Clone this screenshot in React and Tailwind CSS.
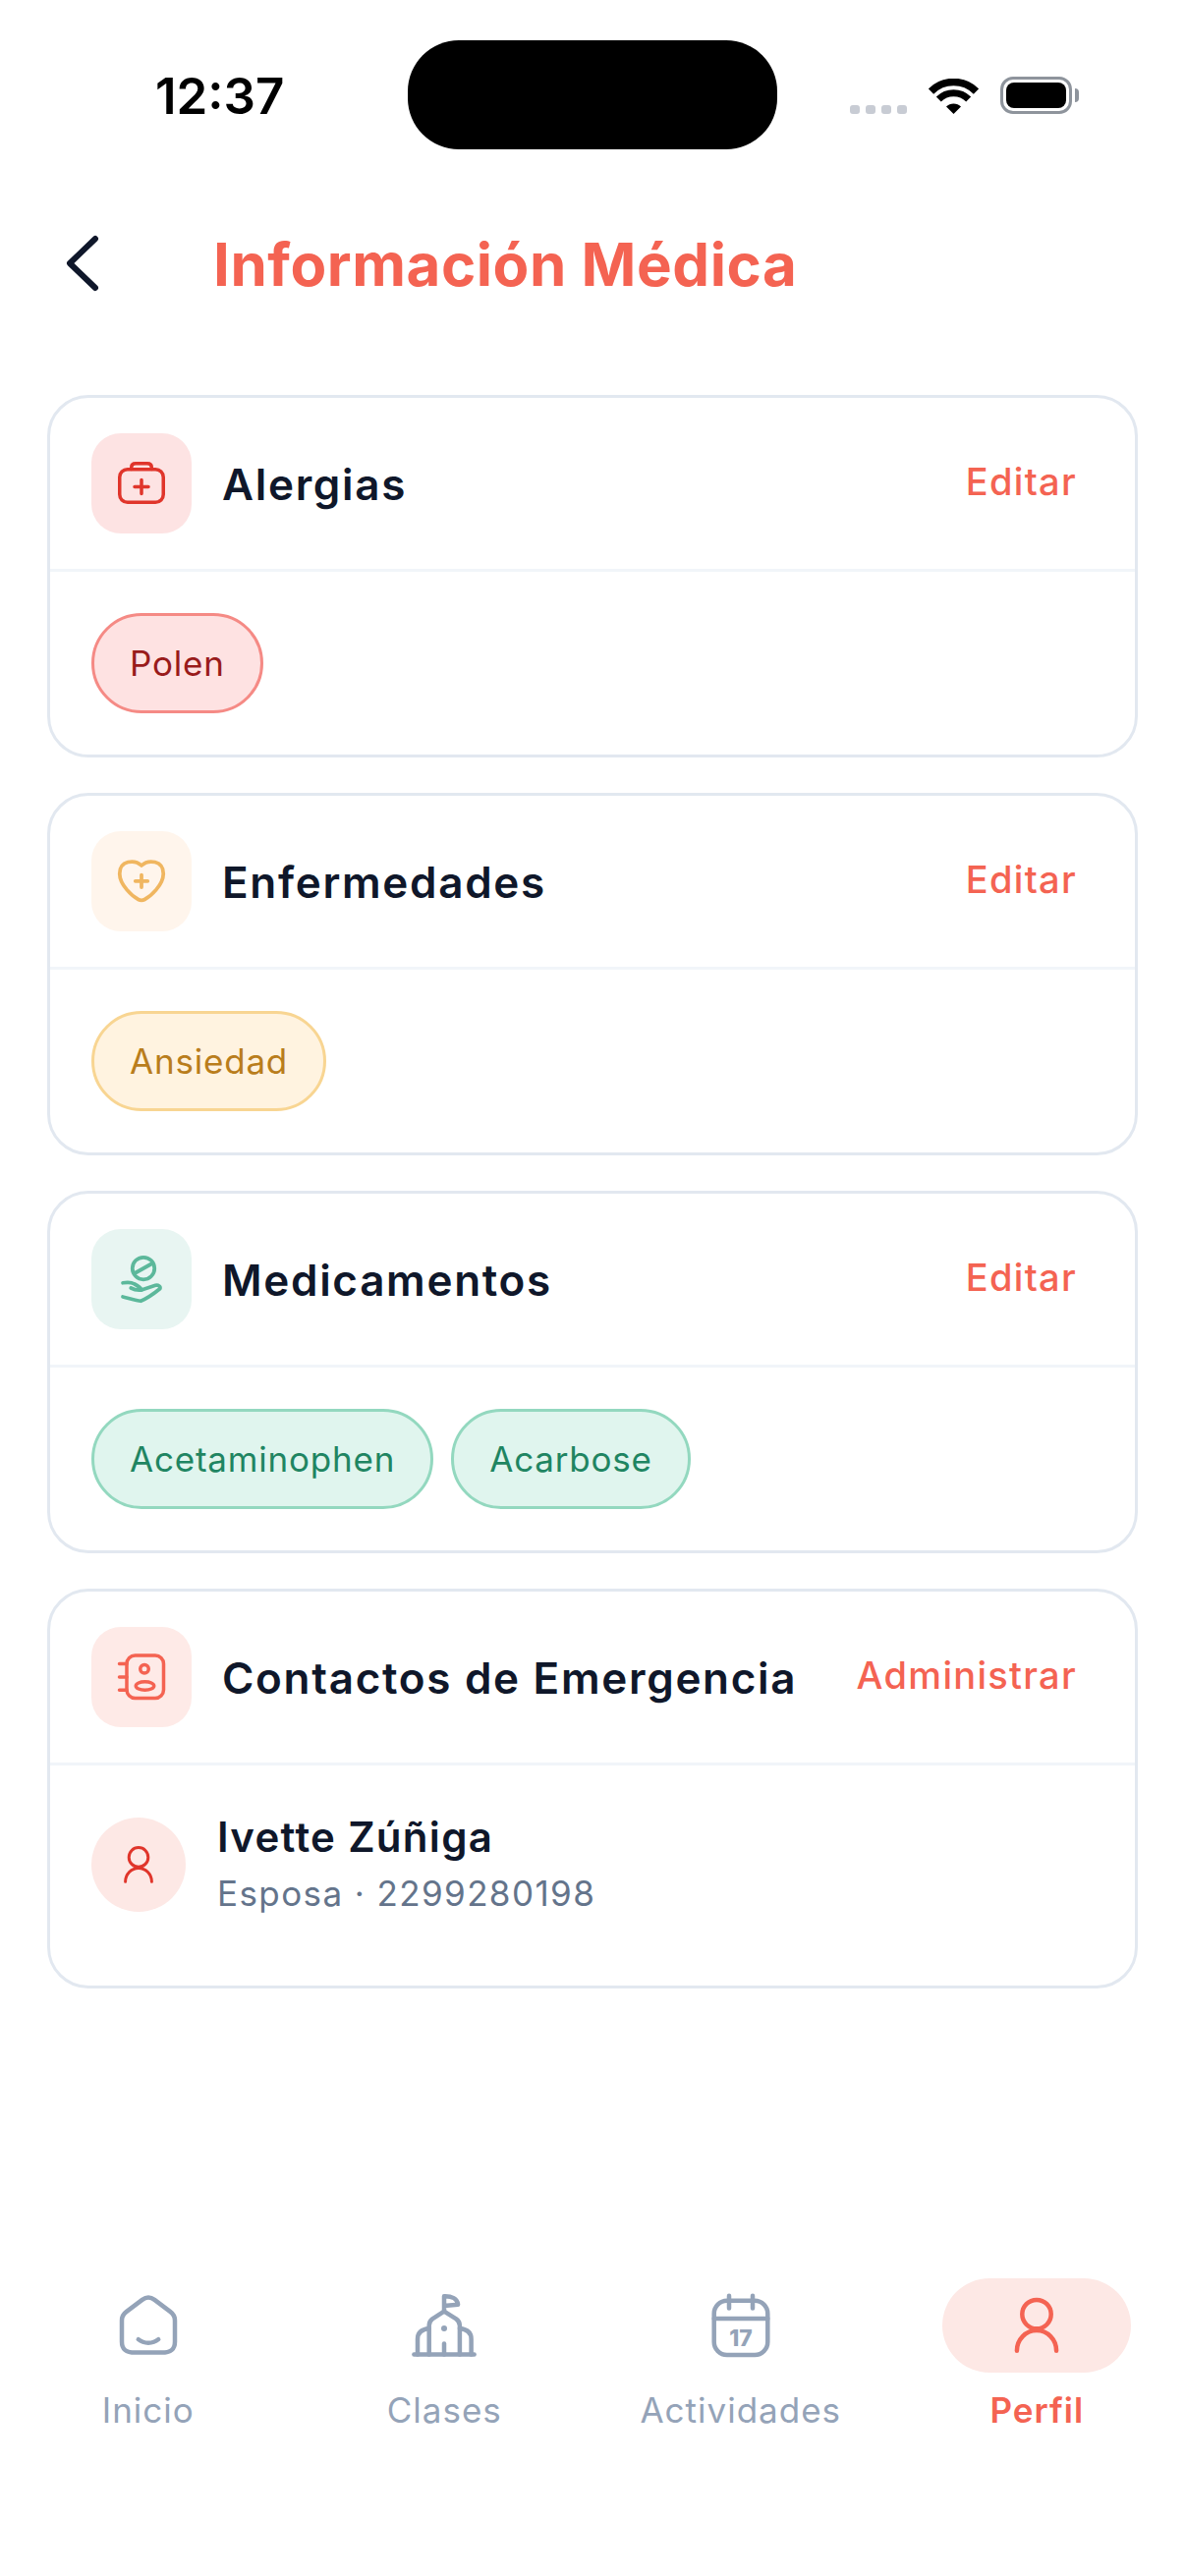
const Ico = ({ size = 60, color, width = 1.5, children }) => (
  <svg
    width={size}
    height={size}
    viewBox="0 0 24 24"
    fill="none"
    stroke={color}
    strokeWidth={width}
    strokeLinecap="round"
    strokeLinejoin="round"
  >
    {children}
  </svg>
);

const BagIcon = () => (
  <Ico color="#e0352b" width={1.4}>
    <rect x="3.1" y="6.3" width="17.8" height="13.4" rx="3.2" />
    <path d="M7.9 6.2V5.4C7.9 4.3 8.6 3.9 9.6 3.9H14.4C15.4 3.9 16.1 4.3 16.1 5.4V6.2" />
    <path d="M12 10.6V16.2M9.2 13.4H14.8" />
  </Ico>
);

const HeartIcon = () => (
  <Ico color="#f0b660">
    <path d="M12 5.6C14.8 3 20.9 3.4 20.9 8.9C20.9 13.6 15.6 18.2 13.3 19.4C12.5 19.8 11.5 19.8 10.7 19.4C8.4 18.2 3.1 13.6 3.1 8.9C3.1 3.4 9.2 3 12 5.6Z" />
    <path d="M12 9.4V14.4M9.5 11.9H14.5" />
  </Ico>
);

const PillIcon = () => (
  <Ico color="#5cb89b">
    <circle cx="12.8" cy="7.6" r="4.5" />
    <path d="M9.6 9.4L16 5.8" />
    <path d="M4.4 13.5C6.5 13.2 8 13.3 9 13.9C10.4 14.6 11.6 15.4 12 16.4C10.5 16.6 9 16.3 7.7 15.6" />
    <path d="M12 16.4L17.7 14.5C18.8 14.2 19.9 15 19.5 15.9C17.4 17.6 14.4 19.8 11.7 20.9C9.8 20.8 7 19.8 4.4 19.2" />
  </Ico>
);

const BookIcon = () => (
  <Ico color="#f46352" width={1.4}>
    <rect x="6" y="3.2" width="15" height="17.4" rx="3.4" />
    <path d="M3 6.6H6M3 12H6M3 17.3H6" />
    <circle cx="13.2" cy="8.7" r="1.7" />
    <ellipse cx="13.4" cy="15.6" rx="3.7" ry="1.7" />
  </Ico>
);

const PersonIcon = ({ size, color }) => (
  <Ico size={size} color={color}>
    <circle cx="12" cy="8.2" r="4.9" />
    <path d="M5.3 20.6C5.3 16.8 8.3 13.7 12 13.7C15.7 13.7 18.7 16.8 18.7 20.6" />
  </Ico>
);

const HomeIcon = () => (
  <Ico size={72} color="#94a3b8">
    <path d="M9.9 3.3L4.6 7.3C3.5 8.1 3 9 3 10.3V17.5C3 20.4 4.6 21.2 7.5 21.2H16.5C19.4 21.2 21 20.4 21 17.5V10.3C21 9 20.5 8.1 19.4 7.3L14.1 3.3C12.8 2.3 11.2 2.3 9.9 3.3Z" />
    <path d="M8.6 16.7C10.5 18.3 13.5 18.3 15.4 16.7" />
  </Ico>
);

const SchoolIcon = () => (
  <Ico size={72} color="#94a3b8">
    <path d="M12 7.2V2.1C14.6 2 16.5 3 16.7 4.9L12 5.3" />
    <path d="M1.8 21.8H22.2" />
    <path d="M6.9 21.8V12C6.9 11 7.2 10.4 8 9.8L12 7.2L16.1 9.8C16.9 10.4 17.3 11 17.3 12V21.8" />
    <path d="M6.9 13C4.4 13.3 3 14.6 3 16.6V21.8M17.3 13C19.8 13.3 21.2 14.6 21.2 16.6V21.8" />
    <path d="M12 18.2V21.8" />
    <path d="M12 13H12.01" strokeWidth="2" />
  </Ico>
);

const CalendarIcon = () => (
  <Ico size={72} color="#94a3b8">
    <rect x="2.9" y="3.6" width="18.2" height="18.4" rx="4.4" />
    <path d="M8 1.9V6.2M16 1.9V6.2M2.9 9.7H21.1" />
    <text x="12" y="19" textAnchor="middle" fontSize="7.6" fontWeight="800" fill="#94a3b8" stroke="none" fontFamily="Inter, sans-serif">
      17
    </text>
  </Ico>
);

const Tag = ({ label, className }) => (
  <span className={`flex h-[102px] items-center rounded-full border-[3px] px-[36px] text-[35px] tracking-[0.8px] ${className}`}>
    {label}
  </span>
);

const Card = ({ title, action = "Editar", icon, iconBg, children, bodyClass }) => (
  <section className="rounded-[42px] border-[3px] border-[#e2e8f0] bg-white">
    <div className="flex items-center border-b-[3px] border-[#f1f5f9] py-[36px] pl-[42px] pr-[59px]">
      <div className={`flex h-[102px] w-[102px] items-center justify-center rounded-[30px] ${iconBg}`}>
        {icon}
      </div>
      <h2 className="ml-[31px] flex-1 pt-[2px] text-[44px] font-[580] tracking-[1.7px] text-[#0f172a]">{title}</h2>
      <span className="pb-[4px] text-[38px] font-medium tracking-[1.3px] text-[#f46352]">{action}</span>
    </div>
    <div className={bodyClass}>{children}</div>
  </section>
);

const NavItem = ({ label, icon, active }) => (
  <div className="flex flex-col items-center">
    <div className={`flex h-[96px] w-[192px] items-center justify-center rounded-full ${active ? "bg-[#fde8e5]" : ""}`}>
      {icon}
    </div>
    <span className={`mt-[14px] text-[35px] leading-[48px] tracking-[1px] ${active ? "font-semibold text-[#f46352]" : "text-[#94a3b8]"}`}>
      {label}
    </span>
  </div>
);

export default function App() {
  return (
    <div className="flex min-h-[2622px] w-[1206px] flex-col bg-white font-['Inter',sans-serif]">
      {/* status bar */}
      <div className="flex items-start pl-[158px] pt-[41px]">
        <span className="mt-[27px] w-[257px] text-[51px] font-semibold leading-[60px] text-black">12:37</span>
        <div className="h-[111px] w-[376px] rounded-[52px] bg-black" />
        <div className="ml-[74px] mt-[37px] flex h-[38px] items-end">
          <div className="flex gap-[6px]">
            <span className="h-[9px] w-[10px] rounded-[3px] bg-[#c8ccd4]" />
            <span className="h-[9px] w-[10px] rounded-[3px] bg-[#c8ccd4]" />
            <span className="h-[9px] w-[10px] rounded-[3px] bg-[#c8ccd4]" />
            <span className="h-[9px] w-[10px] rounded-[3px] bg-[#c8ccd4]" />
          </div>
          <svg className="ml-[22px]" width="51" height="36" viewBox="0 0 51 36" fill="none">
            <path d="M2.5 13A32.5 32.5 0 0 1 48.5 13" stroke="#000" strokeWidth="7.5" />
            <path d="M10.3 21A21.5 21.5 0 0 1 40.7 21" stroke="#000" strokeWidth="7" />
            <path d="M25.5 36L18 28.5A10.6 10.6 0 0 1 33 28.5Z" fill="#000" />
          </svg>
          <div className="relative ml-[22px] flex h-[38px] w-[73px] items-center justify-center rounded-[13px] border-[3px] border-[#8e949c] bg-white">
            <div className="h-[26px] w-[61px] rounded-[8px] bg-black" />
            <div className="absolute -right-[10px] top-[9px] h-[14px] w-[4px] rounded-r-full bg-[#8e949c]" />
          </div>
        </div>
      </div>

      {/* header */}
      <div className="mt-[86px] flex h-[60px] items-center pl-[65px]">
        <svg width="36" height="60" viewBox="0 0 36 60" fill="none">
          <path d="M32 5L6 30L32 55" stroke="#0f172a" strokeWidth="6" strokeLinecap="round" strokeLinejoin="round" />
        </svg>
        <h1 className="ml-[116px] mt-[2px] text-[60px] font-bold tracking-[0.55px] text-[#f46352]">Información Médica</h1>
      </div>

      <div className="mx-[48px] mt-[104px] flex flex-col gap-[36px]">
        <Card title="Alergias" icon={<BagIcon />} iconBg="bg-[#fde3e3]" bodyClass="flex px-[42px] py-[42px]">
          <Tag label="Polen" className="border-[#f58a85] bg-[#fee2e2] text-[#991b1b]" />
        </Card>
        <Card title="Enfermedades" icon={<HeartIcon />} iconBg="bg-[#fff5ec]" bodyClass="flex px-[42px] py-[42px]">
          <Tag label="Ansiedad" className="border-[#f8d592] bg-[#fff3e0] text-[#b97d1c]" />
        </Card>
        <Card title="Medicamentos" icon={<PillIcon />} iconBg="bg-[#e8f5f2]" bodyClass="flex gap-[18px] px-[42px] py-[42px]">
          <Tag label="Acetaminophen" className="border-[#93d8bf] bg-[#e0f5ee] text-[#1f8562]" />
          <Tag label="Acarbose" className="border-[#93d8bf] bg-[#e0f5ee] text-[#1f8562]" />
        </Card>
        <Card title="Contactos de Emergencia" action="Administrar" icon={<BookIcon />} iconBg="bg-[#feeae7]" bodyClass="flex items-center px-[42px] pb-[67px] pt-[45px]">
          <div className="flex h-[96px] w-[96px] items-center justify-center rounded-full bg-[#fde8e5]">
            <PersonIcon size={48} color="#e0352b" />
          </div>
          <div className="ml-[32px] flex flex-col">
            <span className="text-[42px] font-[580] leading-[56px] tracking-[1.3px] text-[#0f172a]">Ivette Zúñiga</span>
            <span className="mt-[2px] text-[35px] leading-[54px] tracking-[1.4px] text-[#64748b]">Esposa · 2299280198</span>
          </div>
        </Card>
      </div>

      {/* tab bar */}
      <nav className="mt-auto grid grid-cols-4 pb-[145px]">
        <NavItem label="Inicio" icon={<HomeIcon />} />
        <NavItem label="Clases" icon={<SchoolIcon />} />
        <NavItem label="Actividades" icon={<CalendarIcon />} />
        <NavItem label="Perfil" icon={<PersonIcon size={72} color="#f46352" />} active />
      </nav>
    </div>
  );
}
